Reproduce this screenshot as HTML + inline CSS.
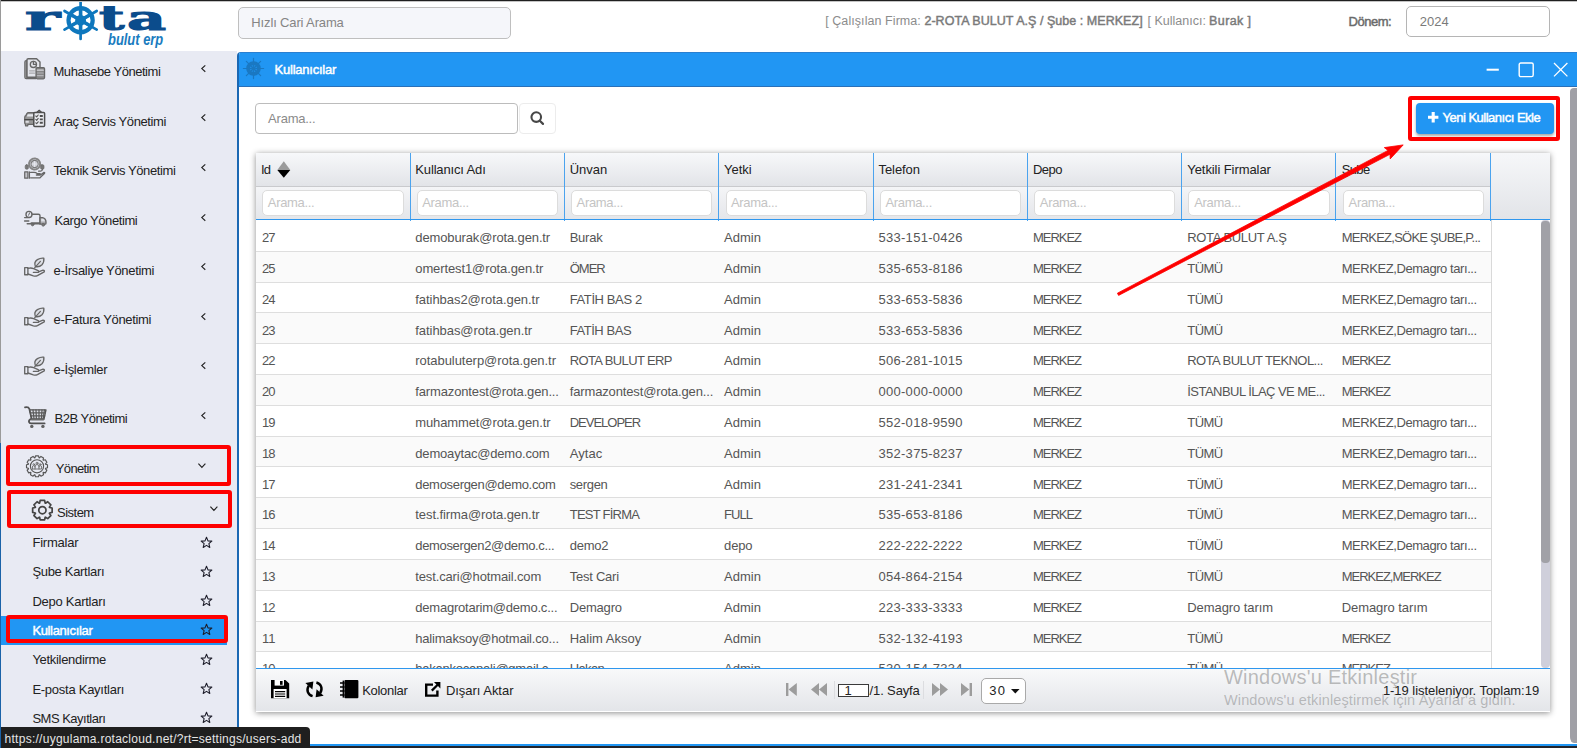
<!DOCTYPE html>
<html lang="tr">
<head>
<meta charset="utf-8">
<title>Rota Bulut ERP - Kullanıcılar</title>
<style>
*{box-sizing:border-box}
html,body{margin:0;padding:0}
body{width:1577px;height:748px;overflow:hidden;position:relative;background:#fff;font-family:"Liberation Sans",sans-serif;font-size:13px;color:#222}
.t{position:absolute;white-space:pre;line-height:1;font-size:13px}
.abs{position:absolute}
#topline{left:0;top:0;width:1577px;height:1px;background:#1f1f1f}
#topline2{left:0;top:1px;width:1577px;height:1px;background:#c4c4c4}
#sidebar{left:0;top:51px;width:237px;height:697px;background:#e8eaf3;overflow:hidden}
#leftedge{left:0;top:0;width:1px;height:748px;background:#9a9a9a}
#leftblue{left:0;top:443px;width:1.4px;height:305px;background:#1a62a8}
#hsearch{left:238px;top:7px;width:273px;height:31.5px;background:#f5f6fa;border:1px solid #bfbfbf;border-radius:5px}
#donem{left:1406px;top:6px;width:144px;height:31px;background:#fff;border:1px solid #b5b5b5;border-radius:5px}
#win{left:237px;top:52px;width:1340px;height:694px;background:#fff;border-left:2px solid #1b68b3;border-top-left-radius:4px;overflow:hidden}
#titlebar{left:-1px;top:0;width:1341px;height:34.7px;background:#2196f3;border-bottom:1px solid #2a70b8;border-top:1px solid #2a7fd0}
#wscroll{left:1569.5px;top:87.5px;width:8px;height:655px;background:#a0a0a6;border-radius:4px 0 0 4px/4px 0 0 6px}
#botblue{left:0;top:744px;width:1577px;height:2.3px;background:#2196f3}
#botdark{left:0;top:746.3px;width:1577px;height:2px;background:#22242b}
#urltip{left:0;top:727.3px;width:309.7px;height:21px;background:#1f1f1f;border-top-right-radius:4px}
.hl{left:1px;top:616px;width:226px;height:29px;background:#2196f3}
.red{position:absolute;border:4.3px solid #fe0000;border-radius:3px}
#srch{left:255px;top:103px;width:263.2px;height:30.5px;background:#fff;border:1px solid #bcbcbc;border-radius:4px}
#srchbtn{left:518.6px;top:103px;width:37px;height:30.5px;background:#fff;border:1px solid #ececec;border-radius:4px}
#addbtn{left:1415.5px;top:103px;width:138.5px;height:30.5px;background:#2196f3;border-radius:4px;box-shadow:0 2px 3px rgba(0,0,0,.35)}
#grid{left:255.7px;top:152.5px;width:1294.3px;height:559px;box-shadow:0 1px 6px rgba(0,0,0,.45)}
#ghead{left:0;top:0;width:1294.3px;height:34px;background:linear-gradient(#f7f8fa,#e2e4e8);border-bottom:1px solid #c9cacd}
#gfilt{left:0;top:34px;width:1294.3px;height:32.3px;background:linear-gradient(#f4f5f7,#e4e6ea)}
#gspare{left:1235.3px;top:0;width:59px;height:66.3px;background:linear-gradient(#f6f7f9,#e2e4e8)}
#gline{left:0;top:66.3px;width:1294.3px;height:1.4px;background:#2f97ee}
.csep{position:absolute;top:0;width:1px;height:68px;background:#4ba3ee}
.fin{position:absolute;top:37.5px;width:141.2px;height:25.6px;background:#fff;border:1px solid #dcdcdc;border-radius:5px}
#gbody{left:0;top:67.7px;width:1294.3px;height:447.8px;background:#fff;overflow:hidden}
.row{position:absolute;left:0;width:1235.3px;height:30.82px;border-bottom:1px solid #dedede}
.row.e{background:#fafafa}
#lastsep{left:1235.3px;top:0;width:1px;height:448px;background:#d9d9d9}
#gtrack{left:1285.3px;top:0;width:8.7px;height:447.5px;background:#cfcfdb;border-radius:4px}
#gthumb{left:1285.3px;top:0.7px;width:8.7px;height:342px;background:#a1a1a7;border-radius:4px}
#gbline{left:0;top:515.3px;width:1294.3px;height:1.4px;background:#2f97ee}
#gtool{left:0;top:516.7px;width:1294.3px;height:42.3px;background:linear-gradient(#f8f9fa,#e3e5e9)}
#pgin{left:838px;top:684px;width:31px;height:13px;background:#fff;border:1px solid #3a3a3a}
#pgsel{left:981.3px;top:678.3px;width:44.5px;height:25.3px;background:#fff;border:1px solid #a9a9a9;border-radius:5px}
.vsep{position:absolute;width:1px;height:18px;top:681px;background:#dcdde0}
svg{position:absolute;overflow:visible}
.wm{color:rgba(120,120,120,.52);font-family:"Liberation Sans",sans-serif}
</style>
</head>
<body>
<!-- header -->
<div id="hsearch" class="abs"></div>
<div id="donem" class="abs"></div>
<span class="t" style="left:25.1px;top:0.8px;font-family:'DejaVu Serif',serif;font-weight:700;font-size:34px;color:#0b4c8c;-webkit-text-stroke:1.1px #0b4c8c;transform-origin:0 0;transform:scaleX(1.955)">r</span>
<span class="t" style="left:99.1px;top:0.8px;font-family:'DejaVu Serif',serif;font-weight:700;font-size:34px;color:#0b4c8c;-webkit-text-stroke:1.1px #0b4c8c;transform-origin:0 0;transform:scaleX(1.624)">t</span>
<span class="t" style="left:126.6px;top:0.8px;font-family:'DejaVu Serif',serif;font-weight:700;font-size:34px;color:#0b4c8c;-webkit-text-stroke:1.1px #0b4c8c;transform-origin:0 0;transform:scaleX(1.775)">a</span>
<svg style="left:0;top:0" width="170" height="52" viewBox="0 0 170 52"><g stroke="#0e77bd" fill="none" stroke-linecap="round"><path d="M80.6 20.3 L80.60 1.70" stroke-width="2.7"/><path d="M80.6 20.3 L80.60 9.30" stroke-width="3.6" stroke-linecap="butt"/><path d="M80.6 20.3 L64.49 11.00" stroke-width="2.7"/><path d="M80.6 20.3 L71.07 14.80" stroke-width="3.6" stroke-linecap="butt"/><path d="M80.6 20.3 L64.49 29.60" stroke-width="2.7"/><path d="M80.6 20.3 L71.07 25.80" stroke-width="3.6" stroke-linecap="butt"/><path d="M80.6 20.3 L80.60 38.90" stroke-width="2.7"/><path d="M80.6 20.3 L80.60 31.30" stroke-width="3.6" stroke-linecap="butt"/><path d="M80.6 20.3 L96.71 29.60" stroke-width="2.7"/><path d="M80.6 20.3 L90.13 25.80" stroke-width="3.6" stroke-linecap="butt"/><path d="M80.6 20.3 L96.71 11.00" stroke-width="2.7"/><path d="M80.6 20.3 L90.13 14.80" stroke-width="3.6" stroke-linecap="butt"/><circle cx="80.6" cy="20.3" r="12.1" stroke-width="4.2"/><circle cx="80.6" cy="20.3" r="5.4" fill="#0e77bd" stroke="none"/></g></svg>
<span class="t" style="left:108.0px;top:32.1px;font-style:italic;font-weight:700;font-size:16.7px;color:#1a7cc0;transform-origin:0 0;transform:scaleX(0.774)">bulut erp</span>
<!-- sidebar -->
<div id="sidebar" class="abs"></div>
<div class="abs hl"></div>
<span class="t" style="left:53.5px;top:65.1px;letter-spacing:-0.46px;">Muhasebe Yönetimi</span>
<span class="t" style="left:53.5px;top:114.7px;letter-spacing:-0.40px;">Araç Servis Yönetimi</span>
<span class="t" style="left:53.5px;top:164.3px;letter-spacing:-0.39px;">Teknik Servis Yönetimi</span>
<span class="t" style="left:54.5px;top:213.9px;letter-spacing:-0.42px;">Kargo Yönetimi</span>
<span class="t" style="left:53.5px;top:263.5px;letter-spacing:-0.32px;">e-İrsaliye Yönetimi</span>
<span class="t" style="left:53.5px;top:313.1px;letter-spacing:-0.32px;">e-Fatura Yönetimi</span>
<span class="t" style="left:53.5px;top:362.7px;letter-spacing:-0.33px;">e-İşlemler</span>
<span class="t" style="left:54.5px;top:412.3px;letter-spacing:-0.48px;">B2B Yönetimi</span>
<span class="t" style="left:55.8px;top:461.9px;letter-spacing:-0.65px;">Yönetim</span>
<span class="t" style="left:57.1px;top:506.1px;letter-spacing:-0.53px;">Sistem</span>
<span class="t" style="left:32.4px;top:536.1px;letter-spacing:-0.20px;">Firmalar</span>
<span class="t" style="left:32.4px;top:565.4px;letter-spacing:-0.31px;">Şube Kartları</span>
<span class="t" style="left:32.4px;top:594.7px;letter-spacing:-0.26px;">Depo Kartları</span>
<span class="t" style="left:32.4px;top:624.0px;color:#fff;-webkit-text-stroke:0.45px #fff;letter-spacing:-0.36px;">Kullanıcılar</span>
<span class="t" style="left:32.4px;top:653.3px;letter-spacing:-0.31px;">Yetkilendirme</span>
<span class="t" style="left:32.4px;top:682.6px;letter-spacing:-0.26px;">E-posta Kayıtları</span>
<span class="t" style="left:32.4px;top:711.9px;letter-spacing:-0.50px;">SMS Kayıtları</span>
<svg style="left:201.3px;top:64.7px" width="5" height="7.2" viewBox="0 0 5 7.2"><path d="M4.3 0.4 L0.8 3.6 L4.3 6.8" fill="none" stroke="#222" stroke-width="1.15"/></svg>
<svg style="left:201.3px;top:114.30000000000001px" width="5" height="7.2" viewBox="0 0 5 7.2"><path d="M4.3 0.4 L0.8 3.6 L4.3 6.8" fill="none" stroke="#222" stroke-width="1.15"/></svg>
<svg style="left:201.3px;top:163.9px" width="5" height="7.2" viewBox="0 0 5 7.2"><path d="M4.3 0.4 L0.8 3.6 L4.3 6.8" fill="none" stroke="#222" stroke-width="1.15"/></svg>
<svg style="left:201.3px;top:213.50000000000003px" width="5" height="7.2" viewBox="0 0 5 7.2"><path d="M4.3 0.4 L0.8 3.6 L4.3 6.8" fill="none" stroke="#222" stroke-width="1.15"/></svg>
<svg style="left:201.3px;top:263.09999999999997px" width="5" height="7.2" viewBox="0 0 5 7.2"><path d="M4.3 0.4 L0.8 3.6 L4.3 6.8" fill="none" stroke="#222" stroke-width="1.15"/></svg>
<svg style="left:201.3px;top:312.7px" width="5" height="7.2" viewBox="0 0 5 7.2"><path d="M4.3 0.4 L0.8 3.6 L4.3 6.8" fill="none" stroke="#222" stroke-width="1.15"/></svg>
<svg style="left:201.3px;top:362.3px" width="5" height="7.2" viewBox="0 0 5 7.2"><path d="M4.3 0.4 L0.8 3.6 L4.3 6.8" fill="none" stroke="#222" stroke-width="1.15"/></svg>
<svg style="left:201.3px;top:411.9px" width="5" height="7.2" viewBox="0 0 5 7.2"><path d="M4.3 0.4 L0.8 3.6 L4.3 6.8" fill="none" stroke="#222" stroke-width="1.15"/></svg>
<svg style="left:198px;top:462.6px" width="8" height="5.4" viewBox="0 0 8 5.4"><path d="M0.4 0.7 L3.9 4.4 L7.4 0.7" fill="none" stroke="#222" stroke-width="1.15"/></svg>
<svg style="left:210.2px;top:506.3px" width="8" height="5.4" viewBox="0 0 8 5.4"><path d="M0.4 0.7 L3.9 4.4 L7.4 0.7" fill="none" stroke="#222" stroke-width="1.15"/></svg>
<svg style="left:199.5px;top:535.5px" width="13" height="13" viewBox="0 0 13 13"><path d="M6.50 1.30 L7.97 4.88 L11.83 5.17 L8.88 7.67 L9.79 11.43 L6.50 9.40 L3.21 11.43 L4.12 7.67 L1.17 5.17 L5.03 4.88Z" fill="none" stroke="#1d1d2a" stroke-width="1.1" stroke-linejoin="round"/></svg>
<svg style="left:199.5px;top:564.8px" width="13" height="13" viewBox="0 0 13 13"><path d="M6.50 1.30 L7.97 4.88 L11.83 5.17 L8.88 7.67 L9.79 11.43 L6.50 9.40 L3.21 11.43 L4.12 7.67 L1.17 5.17 L5.03 4.88Z" fill="none" stroke="#1d1d2a" stroke-width="1.1" stroke-linejoin="round"/></svg>
<svg style="left:199.5px;top:594.1px" width="13" height="13" viewBox="0 0 13 13"><path d="M6.50 1.30 L7.97 4.88 L11.83 5.17 L8.88 7.67 L9.79 11.43 L6.50 9.40 L3.21 11.43 L4.12 7.67 L1.17 5.17 L5.03 4.88Z" fill="none" stroke="#1d1d2a" stroke-width="1.1" stroke-linejoin="round"/></svg>
<svg style="left:199.5px;top:623.4px" width="13" height="13" viewBox="0 0 13 13"><path d="M6.50 1.30 L7.97 4.88 L11.83 5.17 L8.88 7.67 L9.79 11.43 L6.50 9.40 L3.21 11.43 L4.12 7.67 L1.17 5.17 L5.03 4.88Z" fill="none" stroke="#1d1d2a" stroke-width="1.1" stroke-linejoin="round"/></svg>
<svg style="left:199.5px;top:652.7px" width="13" height="13" viewBox="0 0 13 13"><path d="M6.50 1.30 L7.97 4.88 L11.83 5.17 L8.88 7.67 L9.79 11.43 L6.50 9.40 L3.21 11.43 L4.12 7.67 L1.17 5.17 L5.03 4.88Z" fill="none" stroke="#1d1d2a" stroke-width="1.1" stroke-linejoin="round"/></svg>
<svg style="left:199.5px;top:682.0px" width="13" height="13" viewBox="0 0 13 13"><path d="M6.50 1.30 L7.97 4.88 L11.83 5.17 L8.88 7.67 L9.79 11.43 L6.50 9.40 L3.21 11.43 L4.12 7.67 L1.17 5.17 L5.03 4.88Z" fill="none" stroke="#1d1d2a" stroke-width="1.1" stroke-linejoin="round"/></svg>
<svg style="left:199.5px;top:711.3000000000001px" width="13" height="13" viewBox="0 0 13 13"><path d="M6.50 1.30 L7.97 4.88 L11.83 5.17 L8.88 7.67 L9.79 11.43 L6.50 9.40 L3.21 11.43 L4.12 7.67 L1.17 5.17 L5.03 4.88Z" fill="none" stroke="#1d1d2a" stroke-width="1.1" stroke-linejoin="round"/></svg>
<svg style="left:24px;top:57.6px" width="21" height="21.4" viewBox="0 0 21 21.4"><g fill="none" stroke="#666666" stroke-width="1.3" stroke-linejoin="round" stroke-linecap="round"><path d="M0.8 4 Q0.8 2.6 2.2 2.6 H3 V19.2 H12 V20.6 H2.2 Q0.8 20.6 0.8 19.2 Z" fill="#9c9c9c" stroke-width="1.1"/><path d="M3 1.8 Q3 0.7 4.2 0.7 H12.6 L16 4 V18 Q16 19.2 14.8 19.2 H3 Z" fill="#e3e5eb" stroke-width="1.4"/><circle cx="9.4" cy="6.4" r="3.1" stroke-width="1.3"/><path d="M9.4 3.3 V6.4 H12.5" stroke-width="1.2"/><path d="M5.6 12.8 H10.4 M5.6 15.2 H10.4" stroke="#a9a9ad" stroke-width="1.2"/><rect x="12" y="9.6" width="8.6" height="11.2" rx="1.2" fill="#868686" stroke-width="1.2"/><path d="M13.4 12.2 H19.2" stroke="#d6d6da" stroke-width="1.3"/><path d="M13.4 15 H19.2 M13.4 17.6 H19.2" stroke="#b4b4b8" stroke-width="1.1"/></g></svg>
<svg style="left:24px;top:108.6px" width="21.4" height="18" viewBox="0 0 21.4 18"><g fill="none" stroke="#666666" stroke-width="1.3" stroke-linejoin="round" stroke-linecap="round"><path d="M0.7 8.4 Q0.7 7 1.8 6.6 L3 4.4 Q3.4 3.6 4.4 3.6 H9.8 V15.4 H3.8 V16.8 H1.5 V15.4 Q0.7 15 0.7 13.6 Z" fill="#979797" stroke-width="1.2"/><path d="M3.8 5.2 H9.8 V7.4 H2.8 Z" fill="#e6e8ee" stroke="none"/><path d="M0.8 10.6 H9.8" stroke="#484848" stroke-width="1.3"/><rect x="1.6" y="11.8" width="3.2" height="2" fill="#dcdde2" stroke="none"/><rect x="9.8" y="3.6" width="10.8" height="13.8" rx="1" fill="#eceef3" stroke="#4e4e4e" stroke-width="1.5"/><path d="M12.6 3.4 L15.2 1.1 L17.8 3.4 Z" fill="#777" stroke="#4e4e4e" stroke-width="1.1"/><path d="M11.8 7 l0.9 0.9 l1.5 -1.9 M11.8 10.4 l0.9 0.9 l1.5 -1.9 M11.8 13.8 l0.9 0.9 l1.5 -1.9" stroke="#555" stroke-width="1.1"/><path d="M15.8 7 H18.8 M15.8 10.4 H18.8 M15.8 13.8 H18.8" stroke="#4e4e4e" stroke-width="1.9" stroke-linecap="butt"/></g></svg>
<svg style="left:24px;top:156.8px" width="21.4" height="22.4" viewBox="0 0 21.4 22.4"><g fill="none" stroke="#666666" stroke-width="1.3" stroke-linejoin="round" stroke-linecap="round"><circle cx="10.6" cy="7" r="5.5" stroke="#858585" stroke-width="2.0" stroke-dasharray="1.5 0.9"/><circle cx="10.6" cy="7" r="3.6" fill="#cbccd2" stroke="#7a7a7a" stroke-width="1.2"/><path d="M10.6 4.6 V9.4 M8.2 7 H13" stroke="#e6e8ee" stroke-width="1.1"/><rect x="1.2" y="7.8" width="3.2" height="4.4" rx="1.3" fill="#777" stroke="#6e6e6e" stroke-width="0.7"/><rect x="16.6" y="7.8" width="3.4" height="4.4" rx="1.3" fill="#777" stroke="#6e6e6e" stroke-width="0.7"/><path d="M18.4 12.4 Q18.4 14.2 14.6 14.2" stroke-width="1.2"/><rect x="0.7" y="14.8" width="3.2" height="6.4" fill="#c4c4c9" stroke-width="1.2"/><path d="M5.4 14.8 V21.2" stroke-width="1.3"/><path d="M6.6 15.4 H10 Q12 15.4 13.2 16.6 H16.2 M12.4 18 H16.4 L19.8 15.4 Q21.2 15.2 20.4 16.6 L16 20.8 H6.6" stroke-width="1.3"/></g></svg>
<svg style="left:24px;top:209.6px" width="23" height="17" viewBox="0 0 23 17"><g fill="none" stroke="#666666" stroke-width="1.3" stroke-linejoin="round" stroke-linecap="round"><circle cx="5" cy="4.4" r="3" stroke-width="1.4"/><path d="M5.6 2.8 L4.6 5.2" stroke-width="1"/><path d="M8.2 4.2 H14.4 Q16 4.2 16 5.8 V13 H7.2" stroke-width="1.4"/><path d="M16 7.6 H18.6 Q22 8.6 22 12 V13.2 Q22 14.2 21 14.2 H16 Z" fill="#a9a9ad" stroke-width="1.3"/><path d="M17.2 8.8 H19.4 Q20.8 9.6 21 11.6 H17.2 Z" fill="#e0e2e8" stroke="none"/><circle cx="8.6" cy="14.6" r="1.3" fill="#777" stroke-width="0.8"/><circle cx="19.2" cy="14.8" r="1.4" fill="#777" stroke-width="0.8"/><path d="M3.2 13.8 H16" stroke-width="1.4"/><path d="M0.6 7.6 H5.6 M0.6 11 H4.8" stroke-width="1.4"/></g></svg>
<svg style="left:24px;top:257px" width="21.4" height="20" viewBox="0 0 21.4 20"><g fill="none" stroke="#666666" stroke-width="1.35" stroke-linejoin="round" stroke-linecap="round"><path d="M11.4 9.6 Q9.6 5 13.4 2.6 Q16.6 0.8 19.8 1.2 Q20.4 5 18 7.8 Q15.4 10.4 11.4 9.6 Z" fill="#dcdee5"/><path d="M10.6 10.8 L16.4 4.4" stroke-width="1.2"/><rect x="0.7" y="10.6" width="3.2" height="7.2"/><path d="M3.9 11.4 Q7 10.6 9.6 11.6 L13.6 13.4 Q15.4 14.2 14.4 15.4 H9.4 M14.6 14.8 L19 13.2 Q21 13.4 20.2 14.8 L13.4 18.6 Q11.6 19.4 9.4 18.8 L3.9 17"/></g></svg>
<svg style="left:24px;top:306.6px" width="21.4" height="20" viewBox="0 0 21.4 20"><g fill="none" stroke="#666666" stroke-width="1.35" stroke-linejoin="round" stroke-linecap="round"><path d="M11.4 9.6 Q9.6 5 13.4 2.6 Q16.6 0.8 19.8 1.2 Q20.4 5 18 7.8 Q15.4 10.4 11.4 9.6 Z" fill="#dcdee5"/><path d="M10.6 10.8 L16.4 4.4" stroke-width="1.2"/><rect x="0.7" y="10.6" width="3.2" height="7.2"/><path d="M3.9 11.4 Q7 10.6 9.6 11.6 L13.6 13.4 Q15.4 14.2 14.4 15.4 H9.4 M14.6 14.8 L19 13.2 Q21 13.4 20.2 14.8 L13.4 18.6 Q11.6 19.4 9.4 18.8 L3.9 17"/></g></svg>
<svg style="left:24px;top:356.2px" width="21.4" height="20" viewBox="0 0 21.4 20"><g fill="none" stroke="#666666" stroke-width="1.35" stroke-linejoin="round" stroke-linecap="round"><path d="M11.4 9.6 Q9.6 5 13.4 2.6 Q16.6 0.8 19.8 1.2 Q20.4 5 18 7.8 Q15.4 10.4 11.4 9.6 Z" fill="#dcdee5"/><path d="M10.6 10.8 L16.4 4.4" stroke-width="1.2"/><rect x="0.7" y="10.6" width="3.2" height="7.2"/><path d="M3.9 11.4 Q7 10.6 9.6 11.6 L13.6 13.4 Q15.4 14.2 14.4 15.4 H9.4 M14.6 14.8 L19 13.2 Q21 13.4 20.2 14.8 L13.4 18.6 Q11.6 19.4 9.4 18.8 L3.9 17"/></g></svg>
<svg style="left:23.6px;top:405.6px" width="23" height="22.4" viewBox="0 0 23 22.4"><g fill="none" stroke="#525252" stroke-linecap="round" stroke-linejoin="round"><path d="M1 1.4 Q4.4 0.6 5.4 3 L7.6 12.6 Q4.4 14 5 16 Q5.4 17.4 7 17.4 H20.6" stroke-width="1.8"/><path d="M5.8 3.8 H22 L20 13 H7.8 Z" stroke-width="1.3" fill="#dfe1e8"/><path d="M9 4 L10 12.8 M12 4 L12.4 12.8 M15 4 V12.8 M18 4 L17.4 12.8 M20.4 4 L19.2 12.8 M6.4 6.8 H21.4 M7 9.8 H20.8" stroke-width="1.25" stroke="#5a5a5a"/><path d="M7.4 13.6 H19.6" stroke-width="1.6" stroke="#6a6a6a"/></g><circle cx="7.8" cy="20.4" r="1.7" fill="#606060"/><circle cx="18.9" cy="20.4" r="1.7" fill="#606060"/></svg>
<svg style="left:25.6px;top:454.6px" width="22" height="23" viewBox="0 0 22 23"><g fill="none" stroke="#666666" stroke-width="1.3" stroke-linejoin="round" stroke-linecap="round"><path d="M19.56 9.25 L21.49 9.81 L21.49 12.79 L19.56 13.35 L19.44 13.80 L20.84 15.25 L19.34 17.84 L17.38 17.36 L17.06 17.68 L17.54 19.64 L14.95 21.14 L13.50 19.74 L13.05 19.86 L12.49 21.79 L9.51 21.79 L8.95 19.86 L8.50 19.74 L7.05 21.14 L4.46 19.64 L4.94 17.68 L4.62 17.36 L2.66 17.84 L1.16 15.25 L2.56 13.80 L2.44 13.35 L0.51 12.79 L0.51 9.81 L2.44 9.25 L2.56 8.80 L1.16 7.35 L2.66 4.76 L4.62 5.24 L4.94 4.92 L4.46 2.96 L7.05 1.46 L8.50 2.86 L8.95 2.74 L9.51 0.81 L12.49 0.81 L13.05 2.74 L13.50 2.86 L14.95 1.46 L17.54 2.96 L17.06 4.92 L17.38 5.24 L19.34 4.76 L20.84 7.35 L19.44 8.80Z" stroke-width="1.15" stroke="#555"/><circle cx="11" cy="11.3" r="6.6" stroke-width="1.1" stroke="#555"/><path d="M6.4 14 V12 Q6.4 10.6 7.8 10.6 Q9.2 10.6 9.2 12 M12.8 12 Q12.8 10.6 14.2 10.6 Q15.6 10.6 15.6 12 V14 H6.4 M9 14 V11.2 Q9 9.6 11 9.6 Q13 9.6 13 11.2 V14" stroke-width="0.9"/><circle cx="11" cy="8.2" r="1" stroke-width="0.9"/><circle cx="7.8" cy="9.4" r="0.8" stroke-width="0.8"/><circle cx="14.2" cy="9.4" r="0.8" stroke-width="0.8"/></g></svg>
<svg style="left:31.6px;top:498.6px" width="21" height="23" viewBox="0 0 21 23"><g fill="none" stroke="#444" stroke-width="1.7" stroke-linejoin="round"><path d="M17.48 8.43 L20.15 8.98 L20.15 13.42 L17.48 13.97 L17.36 14.25 L18.86 16.53 L15.73 19.66 L13.45 18.16 L13.17 18.28 L12.62 20.95 L8.18 20.95 L7.63 18.28 L7.35 18.16 L5.07 19.66 L1.94 16.53 L3.44 14.25 L3.32 13.97 L0.65 13.42 L0.65 8.98 L3.32 8.43 L3.44 8.15 L1.94 5.87 L5.07 2.74 L7.35 4.24 L7.63 4.12 L8.18 1.45 L12.62 1.45 L13.17 4.12 L13.45 4.24 L15.73 2.74 L18.86 5.87 L17.36 8.15Z"/><circle cx="10.4" cy="11.2" r="3.6"/></g></svg>
<!-- window -->
<div id="win" class="abs"><div id="titlebar" class="abs"></div></div>
<div id="wscroll" class="abs"></div>
<div id="srch" class="abs"></div>
<div id="srchbtn" class="abs"></div>
<div id="addbtn" class="abs"></div>
<div id="grid" class="abs">
  <div id="ghead" class="abs"></div>
  <div id="gfilt" class="abs"></div>
  <div class="fin" style="left:6.1px;width:141.9px"></div><div class="fin" style="left:161.3px"></div><div class="fin" style="left:315.6px"></div><div class="fin" style="left:469.9px"></div><div class="fin" style="left:624.2px"></div><div class="fin" style="left:778.4px"></div><div class="fin" style="left:932.7px"></div><div class="fin" style="left:1087.0px"></div>
  <div id="gspare" class="abs"></div>
  <div id="gbody" class="abs">
    <div class="row" style="top:0.70px"></div><div class="row e" style="top:31.52px"></div><div class="row" style="top:62.34px"></div><div class="row e" style="top:93.16px"></div><div class="row" style="top:123.98px"></div><div class="row e" style="top:154.80px"></div><div class="row" style="top:185.62px"></div><div class="row e" style="top:216.44px"></div><div class="row" style="top:247.26px"></div><div class="row e" style="top:278.08px"></div><div class="row" style="top:308.90px"></div><div class="row e" style="top:339.72px"></div><div class="row" style="top:370.54px"></div><div class="row e" style="top:401.36px"></div><div class="row" style="top:432.18px"></div><span class="t" style="left:6.2px;top:11.0px;color:#555;letter-spacing:-0.87px;">27</span>
<span class="t" style="left:159.6px;top:11.0px;color:#555;letter-spacing:-0.13px;">demoburak@rota.gen.tr</span>
<span class="t" style="left:314.0px;top:11.0px;color:#555;letter-spacing:-0.24px;">Burak</span>
<span class="t" style="left:468.4px;top:11.0px;color:#555;letter-spacing:0.01px;">Admin</span>
<span class="t" style="left:622.8px;top:11.0px;color:#555;letter-spacing:0.28px;">533-151-0426</span>
<span class="t" style="left:777.2px;top:11.0px;color:#555;letter-spacing:-1.00px;">MERKEZ</span>
<span class="t" style="left:931.6px;top:11.0px;color:#555;letter-spacing:-0.36px;">ROTA BULUT A.Ş</span>
<span class="t" style="left:1086.0px;top:11.0px;color:#555;letter-spacing:-0.76px;">MERKEZ,SÖKE ŞUBE,P...</span>
<span class="t" style="left:6.2px;top:41.8px;color:#555;letter-spacing:-0.87px;">25</span>
<span class="t" style="left:159.6px;top:41.8px;color:#555;letter-spacing:-0.11px;">omertest1@rota.gen.tr</span>
<span class="t" style="left:314.0px;top:41.8px;color:#555;letter-spacing:-1.00px;">ÖMER</span>
<span class="t" style="left:468.4px;top:41.8px;color:#555;letter-spacing:0.01px;">Admin</span>
<span class="t" style="left:622.8px;top:41.8px;color:#555;letter-spacing:0.28px;">535-653-8186</span>
<span class="t" style="left:777.2px;top:41.8px;color:#555;letter-spacing:-1.00px;">MERKEZ</span>
<span class="t" style="left:931.6px;top:41.8px;color:#555;letter-spacing:-0.55px;">TÜMÜ</span>
<span class="t" style="left:1086.0px;top:41.8px;color:#555;letter-spacing:-0.43px;">MERKEZ,Demagro tarı...</span>
<span class="t" style="left:6.2px;top:72.6px;color:#555;letter-spacing:-0.87px;">24</span>
<span class="t" style="left:159.6px;top:72.6px;color:#555;letter-spacing:-0.05px;">fatihbas2@rota.gen.tr</span>
<span class="t" style="left:314.0px;top:72.6px;color:#555;letter-spacing:-0.39px;">FATİH BAS 2</span>
<span class="t" style="left:468.4px;top:72.6px;color:#555;letter-spacing:0.01px;">Admin</span>
<span class="t" style="left:622.8px;top:72.6px;color:#555;letter-spacing:0.28px;">533-653-5836</span>
<span class="t" style="left:777.2px;top:72.6px;color:#555;letter-spacing:-1.00px;">MERKEZ</span>
<span class="t" style="left:931.6px;top:72.6px;color:#555;letter-spacing:-0.55px;">TÜMÜ</span>
<span class="t" style="left:1086.0px;top:72.6px;color:#555;letter-spacing:-0.43px;">MERKEZ,Demagro tarı...</span>
<span class="t" style="left:6.2px;top:103.4px;color:#555;letter-spacing:-0.87px;">23</span>
<span class="t" style="left:159.6px;top:103.4px;color:#555;letter-spacing:-0.06px;">fatihbas@rota.gen.tr</span>
<span class="t" style="left:314.0px;top:103.4px;color:#555;letter-spacing:-0.45px;">FATİH BAS</span>
<span class="t" style="left:468.4px;top:103.4px;color:#555;letter-spacing:0.01px;">Admin</span>
<span class="t" style="left:622.8px;top:103.4px;color:#555;letter-spacing:0.28px;">533-653-5836</span>
<span class="t" style="left:777.2px;top:103.4px;color:#555;letter-spacing:-1.00px;">MERKEZ</span>
<span class="t" style="left:931.6px;top:103.4px;color:#555;letter-spacing:-0.55px;">TÜMÜ</span>
<span class="t" style="left:1086.0px;top:103.4px;color:#555;letter-spacing:-0.43px;">MERKEZ,Demagro tarı...</span>
<span class="t" style="left:6.2px;top:134.2px;color:#555;letter-spacing:-0.87px;">22</span>
<span class="t" style="left:159.6px;top:134.2px;color:#555;letter-spacing:-0.05px;">rotabuluterp@rota.gen.tr</span>
<span class="t" style="left:314.0px;top:134.2px;color:#555;letter-spacing:-0.61px;">ROTA BULUT ERP</span>
<span class="t" style="left:468.4px;top:134.2px;color:#555;letter-spacing:0.01px;">Admin</span>
<span class="t" style="left:622.8px;top:134.2px;color:#555;letter-spacing:0.28px;">506-281-1015</span>
<span class="t" style="left:777.2px;top:134.2px;color:#555;letter-spacing:-1.00px;">MERKEZ</span>
<span class="t" style="left:931.6px;top:134.2px;color:#555;letter-spacing:-0.56px;">ROTA BULUT TEKNOL...</span>
<span class="t" style="left:1086.0px;top:134.2px;color:#555;letter-spacing:-1.00px;">MERKEZ</span>
<span class="t" style="left:6.2px;top:165.0px;color:#555;letter-spacing:-0.87px;">20</span>
<span class="t" style="left:159.6px;top:165.0px;color:#555;letter-spacing:-0.14px;">farmazontest@rota.gen...</span>
<span class="t" style="left:314.0px;top:165.0px;color:#555;letter-spacing:-0.14px;">farmazontest@rota.gen...</span>
<span class="t" style="left:468.4px;top:165.0px;color:#555;letter-spacing:0.01px;">Admin</span>
<span class="t" style="left:622.8px;top:165.0px;color:#555;letter-spacing:0.28px;">000-000-0000</span>
<span class="t" style="left:777.2px;top:165.0px;color:#555;letter-spacing:-1.00px;">MERKEZ</span>
<span class="t" style="left:931.6px;top:165.0px;color:#555;letter-spacing:-0.54px;">İSTANBUL İLAÇ VE ME...</span>
<span class="t" style="left:1086.0px;top:165.0px;color:#555;letter-spacing:-1.00px;">MERKEZ</span>
<span class="t" style="left:6.2px;top:195.8px;color:#555;letter-spacing:-0.87px;">19</span>
<span class="t" style="left:159.6px;top:195.8px;color:#555;letter-spacing:-0.12px;">muhammet@rota.gen.tr</span>
<span class="t" style="left:314.0px;top:195.8px;color:#555;letter-spacing:-1.00px;">DEVELOPER</span>
<span class="t" style="left:468.4px;top:195.8px;color:#555;letter-spacing:0.01px;">Admin</span>
<span class="t" style="left:622.8px;top:195.8px;color:#555;letter-spacing:0.28px;">552-018-9590</span>
<span class="t" style="left:777.2px;top:195.8px;color:#555;letter-spacing:-1.00px;">MERKEZ</span>
<span class="t" style="left:931.6px;top:195.8px;color:#555;letter-spacing:-0.55px;">TÜMÜ</span>
<span class="t" style="left:1086.0px;top:195.8px;color:#555;letter-spacing:-0.43px;">MERKEZ,Demagro tarı...</span>
<span class="t" style="left:6.2px;top:226.6px;color:#555;letter-spacing:-0.87px;">18</span>
<span class="t" style="left:159.6px;top:226.6px;color:#555;letter-spacing:-0.18px;">demoaytac@demo.com</span>
<span class="t" style="left:314.0px;top:226.6px;color:#555;letter-spacing:0.08px;">Aytac</span>
<span class="t" style="left:468.4px;top:226.6px;color:#555;letter-spacing:0.01px;">Admin</span>
<span class="t" style="left:622.8px;top:226.6px;color:#555;letter-spacing:0.28px;">352-375-8237</span>
<span class="t" style="left:777.2px;top:226.6px;color:#555;letter-spacing:-1.00px;">MERKEZ</span>
<span class="t" style="left:931.6px;top:226.6px;color:#555;letter-spacing:-0.55px;">TÜMÜ</span>
<span class="t" style="left:1086.0px;top:226.6px;color:#555;letter-spacing:-0.43px;">MERKEZ,Demagro tarı...</span>
<span class="t" style="left:6.2px;top:257.4px;color:#555;letter-spacing:-0.87px;">17</span>
<span class="t" style="left:159.6px;top:257.4px;color:#555;letter-spacing:-0.31px;">demosergen@demo.com</span>
<span class="t" style="left:314.0px;top:257.4px;color:#555;letter-spacing:-0.33px;">sergen</span>
<span class="t" style="left:468.4px;top:257.4px;color:#555;letter-spacing:0.01px;">Admin</span>
<span class="t" style="left:622.8px;top:257.4px;color:#555;letter-spacing:0.28px;">231-241-2341</span>
<span class="t" style="left:777.2px;top:257.4px;color:#555;letter-spacing:-1.00px;">MERKEZ</span>
<span class="t" style="left:931.6px;top:257.4px;color:#555;letter-spacing:-0.55px;">TÜMÜ</span>
<span class="t" style="left:1086.0px;top:257.4px;color:#555;letter-spacing:-0.43px;">MERKEZ,Demagro tarı...</span>
<span class="t" style="left:6.2px;top:288.2px;color:#555;letter-spacing:-0.87px;">16</span>
<span class="t" style="left:159.6px;top:288.2px;color:#555;letter-spacing:-0.08px;">test.firma@rota.gen.tr</span>
<span class="t" style="left:314.0px;top:288.2px;color:#555;letter-spacing:-0.75px;">TEST FİRMA</span>
<span class="t" style="left:468.4px;top:288.2px;color:#555;letter-spacing:-1.00px;">FULL</span>
<span class="t" style="left:622.8px;top:288.2px;color:#555;letter-spacing:0.28px;">535-653-8186</span>
<span class="t" style="left:777.2px;top:288.2px;color:#555;letter-spacing:-1.00px;">MERKEZ</span>
<span class="t" style="left:931.6px;top:288.2px;color:#555;letter-spacing:-0.55px;">TÜMÜ</span>
<span class="t" style="left:1086.0px;top:288.2px;color:#555;letter-spacing:-0.43px;">MERKEZ,Demagro tarı...</span>
<span class="t" style="left:6.2px;top:319.0px;color:#555;letter-spacing:-0.87px;">14</span>
<span class="t" style="left:159.6px;top:319.0px;color:#555;letter-spacing:-0.34px;">demosergen2@demo.c...</span>
<span class="t" style="left:314.0px;top:319.0px;color:#555;letter-spacing:-0.21px;">demo2</span>
<span class="t" style="left:468.4px;top:319.0px;color:#555;letter-spacing:-0.14px;">depo</span>
<span class="t" style="left:622.8px;top:319.0px;color:#555;letter-spacing:0.28px;">222-222-2222</span>
<span class="t" style="left:777.2px;top:319.0px;color:#555;letter-spacing:-1.00px;">MERKEZ</span>
<span class="t" style="left:931.6px;top:319.0px;color:#555;letter-spacing:-0.55px;">TÜMÜ</span>
<span class="t" style="left:1086.0px;top:319.0px;color:#555;letter-spacing:-0.43px;">MERKEZ,Demagro tarı...</span>
<span class="t" style="left:6.2px;top:349.8px;color:#555;letter-spacing:-0.87px;">13</span>
<span class="t" style="left:159.6px;top:349.8px;color:#555;letter-spacing:-0.14px;">test.cari@hotmail.com</span>
<span class="t" style="left:314.0px;top:349.8px;color:#555;letter-spacing:-0.24px;">Test Cari</span>
<span class="t" style="left:468.4px;top:349.8px;color:#555;letter-spacing:0.01px;">Admin</span>
<span class="t" style="left:622.8px;top:349.8px;color:#555;letter-spacing:0.28px;">054-864-2154</span>
<span class="t" style="left:777.2px;top:349.8px;color:#555;letter-spacing:-1.00px;">MERKEZ</span>
<span class="t" style="left:931.6px;top:349.8px;color:#555;letter-spacing:-0.55px;">TÜMÜ</span>
<span class="t" style="left:1086.0px;top:349.8px;color:#555;letter-spacing:-1.00px;">MERKEZ,MERKEZ</span>
<span class="t" style="left:6.2px;top:380.6px;color:#555;letter-spacing:-0.87px;">12</span>
<span class="t" style="left:159.6px;top:380.6px;color:#555;letter-spacing:-0.22px;">demagrotarim@demo.c...</span>
<span class="t" style="left:314.0px;top:380.6px;color:#555;letter-spacing:-0.19px;">Demagro</span>
<span class="t" style="left:468.4px;top:380.6px;color:#555;letter-spacing:0.01px;">Admin</span>
<span class="t" style="left:622.8px;top:380.6px;color:#555;letter-spacing:0.28px;">223-333-3333</span>
<span class="t" style="left:777.2px;top:380.6px;color:#555;letter-spacing:-1.00px;">MERKEZ</span>
<span class="t" style="left:931.6px;top:380.6px;color:#555;letter-spacing:-0.07px;">Demagro tarım</span>
<span class="t" style="left:1086.0px;top:380.6px;color:#555;letter-spacing:-0.07px;">Demagro tarım</span>
<span class="t" style="left:6.2px;top:411.4px;color:#555;letter-spacing:0.10px;">11</span>
<span class="t" style="left:159.6px;top:411.4px;color:#555;letter-spacing:-0.20px;">halimaksoy@hotmail.co...</span>
<span class="t" style="left:314.0px;top:411.4px;color:#555;">Halim Aksoy</span>
<span class="t" style="left:468.4px;top:411.4px;color:#555;letter-spacing:0.01px;">Admin</span>
<span class="t" style="left:622.8px;top:411.4px;color:#555;letter-spacing:0.28px;">532-132-4193</span>
<span class="t" style="left:777.2px;top:411.4px;color:#555;letter-spacing:-1.00px;">MERKEZ</span>
<span class="t" style="left:931.6px;top:411.4px;color:#555;letter-spacing:-0.55px;">TÜMÜ</span>
<span class="t" style="left:1086.0px;top:411.4px;color:#555;letter-spacing:-1.00px;">MERKEZ</span>
<span class="t" style="left:6.2px;top:442.2px;color:#555;letter-spacing:-0.87px;">10</span>
<span class="t" style="left:159.6px;top:442.2px;color:#555;letter-spacing:-0.23px;">hakankocapali@gmail.c...</span>
<span class="t" style="left:314.0px;top:442.2px;color:#555;letter-spacing:-0.64px;">Hakan</span>
<span class="t" style="left:468.4px;top:442.2px;color:#555;letter-spacing:0.01px;">Admin</span>
<span class="t" style="left:622.8px;top:442.2px;color:#555;letter-spacing:0.28px;">530-154-7334</span>
<span class="t" style="left:931.6px;top:442.2px;color:#555;letter-spacing:-0.55px;">TÜMÜ</span>
<span class="t" style="left:1086.0px;top:442.2px;color:#555;letter-spacing:-1.00px;">MERKEZ</span>
    <div id="lastsep" class="abs"></div>
    <div id="gtrack" class="abs"></div>
    <div id="gthumb" class="abs"></div>
  </div>
  <div class="csep" style="left:154.1px"></div><div class="csep" style="left:308.4px"></div><div class="csep" style="left:462.7px"></div><div class="csep" style="left:617.0px"></div><div class="csep" style="left:771.2px"></div><div class="csep" style="left:925.5px"></div><div class="csep" style="left:1079.8px"></div><div class="csep" style="left:1234.1px"></div>
  <div id="gline" class="abs"></div>
  <div id="gbline" class="abs"></div>
  <div id="gtool" class="abs"></div>
</div>
<span class="t" style="left:260.9px;top:162.8px;letter-spacing:-0.74px;">Id</span>
<span class="t" style="left:415.3px;top:162.8px;letter-spacing:-0.15px;">Kullanıcı Adı</span>
<span class="t" style="left:569.7px;top:162.8px;letter-spacing:-0.02px;">Ünvan</span>
<span class="t" style="left:724.1px;top:162.8px;letter-spacing:-0.05px;">Yetki</span>
<span class="t" style="left:878.5px;top:162.8px;letter-spacing:-0.07px;">Telefon</span>
<span class="t" style="left:1032.9px;top:162.8px;letter-spacing:-0.53px;">Depo</span>
<span class="t" style="left:1187.3px;top:162.8px;letter-spacing:-0.08px;">Yetkili Firmalar</span>
<span class="t" style="left:1341.7px;top:162.8px;letter-spacing:-0.62px;">Şube</span>
<span class="t" style="left:267.8px;top:196.3px;color:#c4c4c4;letter-spacing:-0.32px;">Arama...</span>
<span class="t" style="left:422.2px;top:196.3px;color:#c4c4c4;letter-spacing:-0.32px;">Arama...</span>
<span class="t" style="left:576.6px;top:196.3px;color:#c4c4c4;letter-spacing:-0.32px;">Arama...</span>
<span class="t" style="left:731.0px;top:196.3px;color:#c4c4c4;letter-spacing:-0.32px;">Arama...</span>
<span class="t" style="left:885.4px;top:196.3px;color:#c4c4c4;letter-spacing:-0.32px;">Arama...</span>
<span class="t" style="left:1039.8px;top:196.3px;color:#c4c4c4;letter-spacing:-0.32px;">Arama...</span>
<span class="t" style="left:1194.2px;top:196.3px;color:#c4c4c4;letter-spacing:-0.32px;">Arama...</span>
<span class="t" style="left:1348.6px;top:196.3px;color:#c4c4c4;letter-spacing:-0.32px;">Arama...</span>
<svg style="left:243px;top:58px" width="21" height="21" viewBox="0 0 21 21"><g stroke="#1a78c2" fill="none" stroke-linecap="round"><path d="M12.80 10.50 L20.60 10.50" stroke-width="1.2"/><path d="M12.13 12.13 L17.64 17.64" stroke-width="1.2"/><path d="M10.50 12.80 L10.50 20.60" stroke-width="1.2"/><path d="M8.87 12.13 L3.36 17.64" stroke-width="1.2"/><path d="M8.20 10.50 L0.40 10.50" stroke-width="1.2"/><path d="M8.87 8.87 L3.36 3.36" stroke-width="1.2"/><path d="M10.50 8.20 L10.50 0.40" stroke-width="1.2"/><path d="M12.13 8.87 L17.64 3.36" stroke-width="1.2"/><circle cx="10.5" cy="10.5" r="5.3" stroke-width="4.0"/><circle cx="10.5" cy="10.5" r="2.3" fill="#1a78c2" stroke="none"/></g></svg>
<svg style="left:1486px;top:68px" width="14" height="4" viewBox="0 0 14 4"><path d="M0.6 1.7 H12.8" stroke="#fff" stroke-width="2" fill="none"/></svg>
<svg style="left:1518px;top:62px" width="17" height="16" viewBox="0 0 17 16"><rect x="1.2" y="1" width="14" height="13.6" rx="1.6" stroke="#fff" stroke-width="1.4" fill="none"/></svg>
<svg style="left:1553px;top:62px" width="16" height="16" viewBox="0 0 16 16"><path d="M1 1 L14.4 14.4 M14.4 1 L1 14.4" stroke="#fff" stroke-width="1.3" fill="none"/></svg>
<svg style="left:529px;top:110px" width="16" height="16" viewBox="0 0 16 16"><circle cx="7.25" cy="7.1" r="4.8" stroke="#474747" stroke-width="2.1" fill="none"/><path d="M10.8 10.7 L14 13.9" stroke="#474747" stroke-width="2.2" stroke-linecap="round"/></svg>
<svg style="left:1428.4px;top:112px" width="10.4" height="10.4" viewBox="0 0 10.4 10.4"><path d="M5.2 0 V10.4 M0 5.2 H10.4" stroke="#fff" stroke-width="3.1"/></svg>
<svg style="left:277px;top:160.6px" width="14" height="17" viewBox="0 0 14 17"><path d="M6.8 0.3 L13.3 9.1 H0.3 Z" fill="#9b9b9b"/><path d="M0.3 9.1 H13.3 L6.8 16.7 Z" fill="#000"/></svg>
<div id="pgin" class="abs"></div>
<div id="pgsel" class="abs"></div>
<div class="vsep" style="left:834px"></div>
<div class="vsep" style="left:923.4px"></div>
<svg style="left:270.5px;top:680.3px" width="18.2" height="18.2" viewBox="0 0 18.2 18.2"><path d="M0 0 H14.4 L18.2 3.6 V18.2 H0 Z" fill="#000"/><rect x="3.6" y="0" width="9.4" height="5.6" fill="#fff"/><rect x="9" y="1" width="2.6" height="3.8" fill="#000"/><rect x="2.6" y="9" width="13" height="9.2" fill="#fff"/><path d="M4 11.6 H14.2 M4 14 H14.2 M4 16.4 H14.2" stroke="#000" stroke-width="1.2"/></svg>
<svg style="left:304.8px;top:681.2px" width="19" height="17" viewBox="0 0 19 17"><g fill="none" stroke="#000" stroke-width="2.4"><path d="M7.6 15.2 C3.2 14 0.8 9.6 3.8 4.6"/><path d="M11.4 1.5 C15.8 2.7 18.2 7.1 15.2 12.1"/></g><path d="M0.4 2 L8.4 0.5 L7.4 8.6 Z" fill="#000"/><path d="M18.6 14.8 L10.6 16.3 L11.6 8.2 Z" fill="#000"/></svg>
<svg style="left:340.4px;top:680.3px" width="18.4" height="18.2" viewBox="0 0 18.4 18.2"><rect x="4.4" y="0" width="14" height="18.2" rx="1" fill="#000"/><rect x="2.6" y="0.6" width="1.4" height="17" fill="#000"/><path d="M0 3 H4.6 M0 7 H4.6 M0 11 H4.6 M0 15 H4.6" stroke="#000" stroke-width="1.6"/></svg>
<svg style="left:425px;top:682px" width="15.4" height="14.8" viewBox="0 0 15.4 14.8"><path d="M8 2.6 H1.2 V13.6 H12.4 V8.4" fill="none" stroke="#000" stroke-width="2.4"/><path d="M9 0 H15.4 V6.4 L13 4 L7.6 9.4 L6 7.8 L11.4 2.4 Z" fill="#000"/></svg>
<svg style="left:785.6px;top:683px" width="11" height="13" viewBox="0 0 11 13"><rect x="0" y="0" width="2.4" height="13" fill="#9c9c9c"/><path d="M10.8 0 V13 L2.6 6.5 Z" fill="#9c9c9c"/></svg>
<svg style="left:810.6px;top:683px" width="16" height="13" viewBox="0 0 16 13"><path d="M8 0 V13 L0 6.5 Z M16 0 V13 L8 6.5 Z" fill="#9c9c9c"/></svg>
<svg style="left:932.2px;top:683px" width="16" height="13" viewBox="0 0 16 13"><path d="M0 0 V13 L8 6.5 Z M8 0 V13 L16 6.5 Z" fill="#9c9c9c"/></svg>
<svg style="left:961px;top:683px" width="11" height="13" viewBox="0 0 11 13"><rect x="8.6" y="0" width="2.4" height="13" fill="#9c9c9c"/><path d="M0 0 V13 L8.2 6.5 Z" fill="#9c9c9c"/></svg>
<svg style="left:1010.6px;top:689px" width="8.6" height="4.6" viewBox="0 0 8.6 4.6"><path d="M0 0 H8.6 L4.3 4.6 Z" fill="#111"/></svg>
<span class="t" style="left:251.3px;top:16.2px;color:#858585;letter-spacing:-0.14px;">Hızlı Cari Arama</span>
<span class="t" style="left:825.2px;top:15.1px;font-size:12.5px;color:#8c8c8c;letter-spacing:0.07px;">[ Çalışılan Firma:</span>
<span class="t" style="left:924.4px;top:15.1px;font-size:12.5px;color:#7a7a7a;-webkit-text-stroke:0.45px #7a7a7a;letter-spacing:0.04px;">2-ROTA BULUT A.Ş / Şube : MERKEZ]</span>
<span class="t" style="left:1147.5px;top:15.1px;font-size:12.5px;color:#8c8c8c;">[ Kullanıcı:</span>
<span class="t" style="left:1209.1px;top:15.1px;font-size:12.5px;color:#7a7a7a;-webkit-text-stroke:0.45px #7a7a7a;letter-spacing:0.38px;">Burak ]</span>
<span class="t" style="left:1348.5px;top:15.0px;color:#6a6a6a;-webkit-text-stroke:0.45px #6a6a6a;letter-spacing:-0.47px;">Dönem:</span>
<span class="t" style="left:1419.7px;top:15.0px;color:#7a7a7a;letter-spacing:0.03px;">2024</span>
<span class="t" style="left:274.6px;top:62.9px;color:#fff;-webkit-text-stroke:0.45px #fff;letter-spacing:-0.24px;">Kullanıcılar</span>
<span class="t" style="left:268.1px;top:112.0px;color:#8a8a8a;letter-spacing:-0.23px;">Arama...</span>
<span class="t" style="left:1442.5px;top:110.8px;color:#fff;-webkit-text-stroke:0.45px #fff;letter-spacing:-0.50px;">Yeni Kullanıcı Ekle</span>
<span class="t" style="left:362.2px;top:683.7px;letter-spacing:-0.29px;">Kolonlar</span>
<span class="t" style="left:445.9px;top:683.7px;letter-spacing:-0.03px;">Dışarı Aktar</span>
<span class="t" style="left:844.6px;top:684.0px;">1</span>
<span class="t" style="left:869.6px;top:684.0px;letter-spacing:-0.14px;">/1. Sayfa</span>
<span class="t" style="left:989.3px;top:684.0px;letter-spacing:1.20px;">30</span>
<span class="t" style="left:1382.9px;top:684.2px;letter-spacing:-0.04px;">1-19 listeleniyor. Toplam:19</span>
<span class="t" style="left:1223.9px;top:666.8px;font-size:20px;color:rgba(110,110,110,.45);letter-spacing:0.24px;">Windows'u Etkinleştir</span>
<span class="t" style="left:1224.0px;top:693.4px;font-size:14.5px;color:rgba(110,110,110,.42);letter-spacing:0.11px;">Windows'u etkinleştirmek için Ayarlar'a gidin.</span>
<!-- annotations -->
<div class="red" style="left:6px;top:445.4px;width:224.5px;height:40.8px"></div>
<div class="red" style="left:6.5px;top:489.6px;width:225px;height:38.8px"></div>
<div class="red" style="left:6.3px;top:615px;width:221.3px;height:28.3px"></div>
<div class="red" style="left:1407.5px;top:96.2px;width:152px;height:44.4px"></div>
<svg style="left:0px;top:0px" width="1577" height="748" viewBox="0 0 1577 748"><path d="M1118.6 295.4 L1390.0 154.3 L1390.2 158.9 L1403.2 144.9 L1384.3 147.6 L1388.0 150.4 L1117.4 293.2Z" fill="#fe0000" stroke="#fe0000" stroke-width="0.8" stroke-linejoin="round"/></svg>
<!-- frame -->
<div id="botblue" class="abs"></div>
<div id="botdark" class="abs"></div>
<div id="urltip" class="abs"></div>
<span class="t" style="left:4.6px;top:732.6px;font-size:12px;color:#e6e6e6;letter-spacing:0.26px;">https://uygulama.rotacloud.net/?rt=settings/users-add</span>
<div id="topline" class="abs"></div>
<div id="topline2" class="abs"></div>
<div id="leftedge" class="abs"></div>
<div id="leftblue" class="abs"></div>
</body>
</html>
